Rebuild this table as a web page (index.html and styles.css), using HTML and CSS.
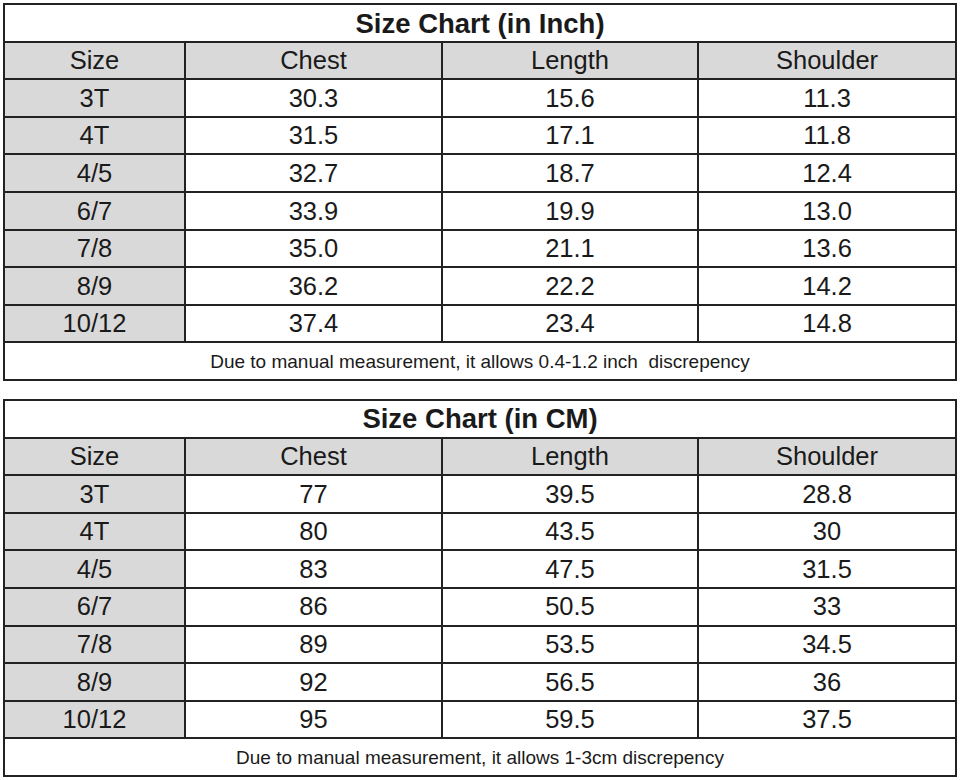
FILE: index.html
```html
<!DOCTYPE html>
<html>
<head>
<meta charset="utf-8">
<link rel="stylesheet" href="styles.css">
</head>
<body>
<div class="page">
<table class="chart">
  <colgroup><col class="c1"><col class="c2"><col class="c3"><col class="c4"></colgroup>
  <tr><td class="title" colspan="4">Size Chart (in Inch)</td></tr>
  <tr class="head"><td>Size</td><td>Chest</td><td>Length</td><td>Shoulder</td></tr>
  <tr><td class="size">3T</td><td>30.3</td><td>15.6</td><td>11.3</td></tr>
  <tr><td class="size">4T</td><td>31.5</td><td>17.1</td><td>11.8</td></tr>
  <tr><td class="size">4/5</td><td>32.7</td><td>18.7</td><td>12.4</td></tr>
  <tr><td class="size">6/7</td><td>33.9</td><td>19.9</td><td>13.0</td></tr>
  <tr><td class="size">7/8</td><td>35.0</td><td>21.1</td><td>13.6</td></tr>
  <tr><td class="size">8/9</td><td>36.2</td><td>22.2</td><td>14.2</td></tr>
  <tr><td class="size">10/12</td><td>37.4</td><td>23.4</td><td>14.8</td></tr>
  <tr><td class="note" colspan="4">Due to manual measurement, it allows 0.4-1.2 inch&nbsp; discrepency</td></tr>
</table>
<table class="chart">
  <colgroup><col class="c1"><col class="c2"><col class="c3"><col class="c4"></colgroup>
  <tr><td class="title" colspan="4">Size Chart (in CM)</td></tr>
  <tr class="head"><td>Size</td><td>Chest</td><td>Length</td><td>Shoulder</td></tr>
  <tr><td class="size">3T</td><td>77</td><td>39.5</td><td>28.8</td></tr>
  <tr><td class="size">4T</td><td>80</td><td>43.5</td><td>30</td></tr>
  <tr><td class="size">4/5</td><td>83</td><td>47.5</td><td>31.5</td></tr>
  <tr><td class="size">6/7</td><td>86</td><td>50.5</td><td>33</td></tr>
  <tr><td class="size">7/8</td><td>89</td><td>53.5</td><td>34.5</td></tr>
  <tr><td class="size">8/9</td><td>92</td><td>56.5</td><td>36</td></tr>
  <tr><td class="size">10/12</td><td>95</td><td>59.5</td><td>37.5</td></tr>
  <tr><td class="note" colspan="4">Due to manual measurement, it allows 1-3cm discrepency</td></tr>
</table>
</div>
</body>
</html>
```
FILE: styles.css
```css
html, body {
  margin: 0;
  padding: 0;
  background: #ffffff;
}
.page {
  padding: 3px 0 0 3px;
  display: flex;
  flex-direction: column;
  gap: 18px;
  font-family: "Liberation Sans", Arial, sans-serif;
  color: #1a1a1a;
}
.chart {
  border-collapse: collapse;
  width: 954px;
  table-layout: fixed;
  border: 2px solid #222;
}
.c1 { width: 181px; }
.c2 { width: 257px; }
.c3 { width: 256px; }
.c4 { width: 258px; }
.chart td {
  border: 2px solid #222;
  height: 34.6px;
  padding: 1px 0 0 0;
  text-align: center;
  vertical-align: middle;
  font-size: 25.5px;
  line-height: 1;
}
.chart td.title {
  font-weight: bold;
  font-size: 27.5px;
  background: #fff;
}
.chart tr.head td {
  background: #d9d9d9;
}
.chart td.size {
  background: #d9d9d9;
}
.chart td.note {
  font-size: 19px;
}
```
